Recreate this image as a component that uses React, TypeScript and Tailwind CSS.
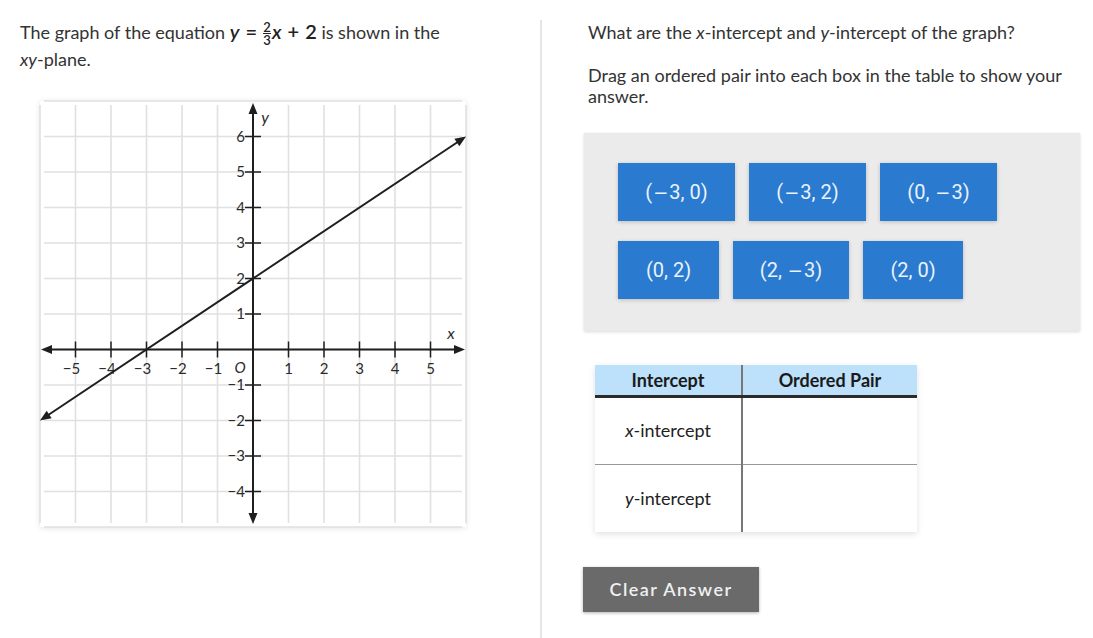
import React from 'react';

const U = 35.5;
const OX = 213;
const OY = 248.5;
const px = (x: number) => OX + U * x;
const py = (y: number) => OY - U * y;

const tiles = [
  [
    { a: '(', m: true, b: '3, 0)', w: 'w-[117px]' },
    { a: '(', m: true, b: '3, 2)', w: 'w-[117px]' },
    { a: '(0, ', m: true, b: '3)', w: 'w-[117px]' },
  ],
  [
    { a: '(0, 2)', m: false, b: '', w: 'w-[101px]' },
    { a: '(2, ', m: true, b: '3)', w: 'w-[116px]' },
    { a: '(2, 0)', m: false, b: '', w: 'w-[100px]' },
  ],
];

function arrowHead(tx: number, ty: number, dx: number, dy: number) {
  const len = Math.hypot(dx, dy);
  const ux = dx / len;
  const uy = dy / len;
  const bx = tx - ux * 11;
  const by = ty - uy * 11;
  const nx = -uy * 4.5;
  const ny = ux * 4.5;
  return `${tx},${ty} ${bx + nx},${by + ny} ${bx - nx},${by - ny}`;
}

function Graph() {
  const ticks = [-5, -4, -3, -2, -1, 1, 2, 3, 4, 5];
  const yTicks = [6, 5, 4, 3, 2, 1, -1, -2, -3, -4];
  const grid = Array.from({ length: 13 }, (_, i) => i * U);

  // line y = 2/3 x + 2 from x = -6 to x = 6
  const x1 = px(-6), y1 = py(-2);
  const x2 = px(6), y2 = py(6);
  const dx = x2 - x1, dy = y2 - y1;
  const l = Math.hypot(dx, dy);

  return (
    <svg width="426" height="426" viewBox="0 0 426 426" className="block overflow-visible">
      {grid.map((g) => (
        <g key={g}>
          <line x1={g} y1={4} x2={g} y2={422} stroke="#e0e0e0" strokeWidth="1.6" />
          <line x1={4} y1={g} x2={422} y2={g} stroke="#e0e0e0" strokeWidth="1.6" />
        </g>
      ))}

      {/* axes */}
      <line x1={10} y1={OY} x2={416} y2={OY} stroke="#1f1f1f" strokeWidth="2" />
      <polygon points={arrowHead(1, OY, -1, 0)} fill="#1f1f1f" />
      <polygon points={arrowHead(425, OY, 1, 0)} fill="#1f1f1f" />
      <line x1={OX} y1={11} x2={OX} y2={413} stroke="#1f1f1f" strokeWidth="2" />
      <polygon points={arrowHead(OX, 2, 0, -1)} fill="#1f1f1f" />
      <polygon points={arrowHead(OX, 423, 0, 1)} fill="#1f1f1f" />

      {ticks.map((t) => (
        <g key={`x${t}`}>
          <line x1={px(t)} y1={OY - 8} x2={px(t)} y2={OY + 8} stroke="#1f1f1f" strokeWidth="1.5" />
          <text
            x={t < 0 ? px(t) - 4 : px(t)}
            y={OY + 24}
            textAnchor="middle"
            fontSize="15"
            fill="#2b2b2b"
            fontFamily="Lato, sans-serif"
          >
            {t < 0 ? `−${-t}` : t}
          </text>
        </g>
      ))}

      {yTicks.map((t) => (
        <g key={`y${t}`}>
          <line x1={OX - 8} y1={py(t)} x2={OX + 8} y2={py(t)} stroke="#1f1f1f" strokeWidth="1.5" />
          <text
            x={OX - 8}
            y={py(t) + 5}
            textAnchor="end"
            fontSize="15"
            fill="#2b2b2b"
            fontFamily="Lato, sans-serif"
          >
            {t < 0 ? `−${-t}` : t}
          </text>
        </g>
      ))}

      <text x={OX - 13} y={OY + 23} textAnchor="middle" fontSize="15" fontStyle="italic" fill="#2b2b2b" fontFamily="Lato, sans-serif">
        O
      </text>
      <text x={411} y={OY - 11} textAnchor="middle" fontSize="16" fontStyle="italic" fill="#2b2b2b" fontFamily="Lato, sans-serif">
        x
      </text>
      <text x={225} y={22} textAnchor="middle" fontSize="16" fontStyle="italic" fill="#2b2b2b" fontFamily="Lato, sans-serif">
        y
      </text>

      {/* graph line */}
      <line
        x1={x1 + (dx / l) * 9}
        y1={y1 + (dy / l) * 9}
        x2={x2 - (dx / l) * 9}
        y2={y2 - (dy / l) * 9}
        stroke="#1f1f1f"
        strokeWidth="2"
      />
      <polygon points={arrowHead(x1, y1, -dx, -dy)} fill="#1f1f1f" />
      <polygon points={arrowHead(x2, y2, dx, dy)} fill="#1f1f1f" />
    </svg>
  );
}

export default function App() {
  return (
    <div className="w-[1093px] h-[638px] bg-white flex overflow-hidden text-[#333] font-['Lato',sans-serif]">
      {/* Left: stimulus */}
      <div className="w-[540px] shrink-0 pl-5 pt-[18px]">
        <p className="text-[18px] leading-[27px] w-[470px]">
          The graph of the equation{' '}
          <span className="font-semibold text-[20px] text-[#222] whitespace-nowrap">
            <i>y</i>
            <span className="mx-[6px]">=</span>
            <span className="inline-flex flex-col items-center align-middle text-[13px] leading-[12px] mr-[1px]">
              <span>2</span>
              <span className="border-t border-[#222] w-[8px]" />
              <span>3</span>
            </span>
            <i>x</i>
            <span className="mx-[6px]">+</span>2
          </span>{' '}
          is shown in the <span className="whitespace-nowrap"><i>xy</i>-plane.</span>
        </p>
        <div className="mt-[28px] ml-5 w-[426px] bg-white shadow-[0_1px_6px_rgba(0,0,0,0.12)]">
          <Graph />
        </div>
      </div>

      {/* divider */}
      <div className="w-[2px] mt-5 bg-[#e6e6e6] shrink-0" />

      {/* Right: item */}
      <div className="ml-[42px] w-[496px] pt-5">
        <p className="ml-1 text-[18px] leading-[24px]">
          What are the <i>x</i>-intercept and <i>y</i>-intercept of the graph?
        </p>
        <p className="ml-1 mt-[21px] text-[18px] leading-[21px] w-[486px]">
          Drag an ordered pair into each box in the table to show your answer.
        </p>

        <div className="mt-[26px] h-[198px] bg-[#ebebeb] shadow-[0_1px_3px_rgba(0,0,0,0.15)] pl-[34px] pt-[30px] flex flex-col gap-5">
          {tiles.map((row, i) => (
            <div key={i} className="flex gap-[14px]">
              {row.map((t) => (
                <div
                  key={t.a + t.b}
                  className={`${t.w} h-[58px] bg-[#2a7ad0] shadow-[0_1px_4px_rgba(0,0,0,0.2)] flex items-center justify-center text-[20px] text-[#eaf2fb] font-['Roboto',sans-serif] whitespace-pre`}
                >
                  {t.a}
                  {t.m && <span className="font-['DejaVu_Sans',sans-serif] text-[18px] mx-[1px]">−</span>}
                  {t.b}
                </div>
              ))}
            </div>
          ))}
        </div>

        <table className="mt-[34px] ml-[11px] w-[322px] border-collapse bg-white shadow-[0_2px_6px_rgba(0,0,0,0.12)] text-[18px]">
          <thead>
            <tr className="bg-[#bde0fb] h-[31px] border-b-[3px] border-[#2b2b2b]">
              <th className="w-[147px] p-0 leading-[28px] font-bold text-[#1a1a1a] border-r-2 border-[#777]">Intercept</th>
              <th className="p-0 leading-[28px] font-bold text-[#1a1a1a]">Ordered Pair</th>
            </tr>
          </thead>
          <tbody>
            <tr className="h-[68px] border-b border-[#999]">
              <td className="text-center border-r-2 border-[#777] text-[#222]">
                <i>x</i>-intercept
              </td>
              <td />
            </tr>
            <tr className="h-[68px]">
              <td className="text-center border-r-2 border-[#777] text-[#222]">
                <i>y</i>-intercept
              </td>
              <td />
            </tr>
          </tbody>
        </table>

        <button className="mt-[35px] -ml-px w-[176px] h-[45px] bg-[#6a6a6a] text-[#f0f0f0] text-[18px] font-semibold tracking-[0.08em] shadow-[0_1px_3px_rgba(0,0,0,0.3)]">
          Clear Answer
        </button>
      </div>
    </div>
  );
}
